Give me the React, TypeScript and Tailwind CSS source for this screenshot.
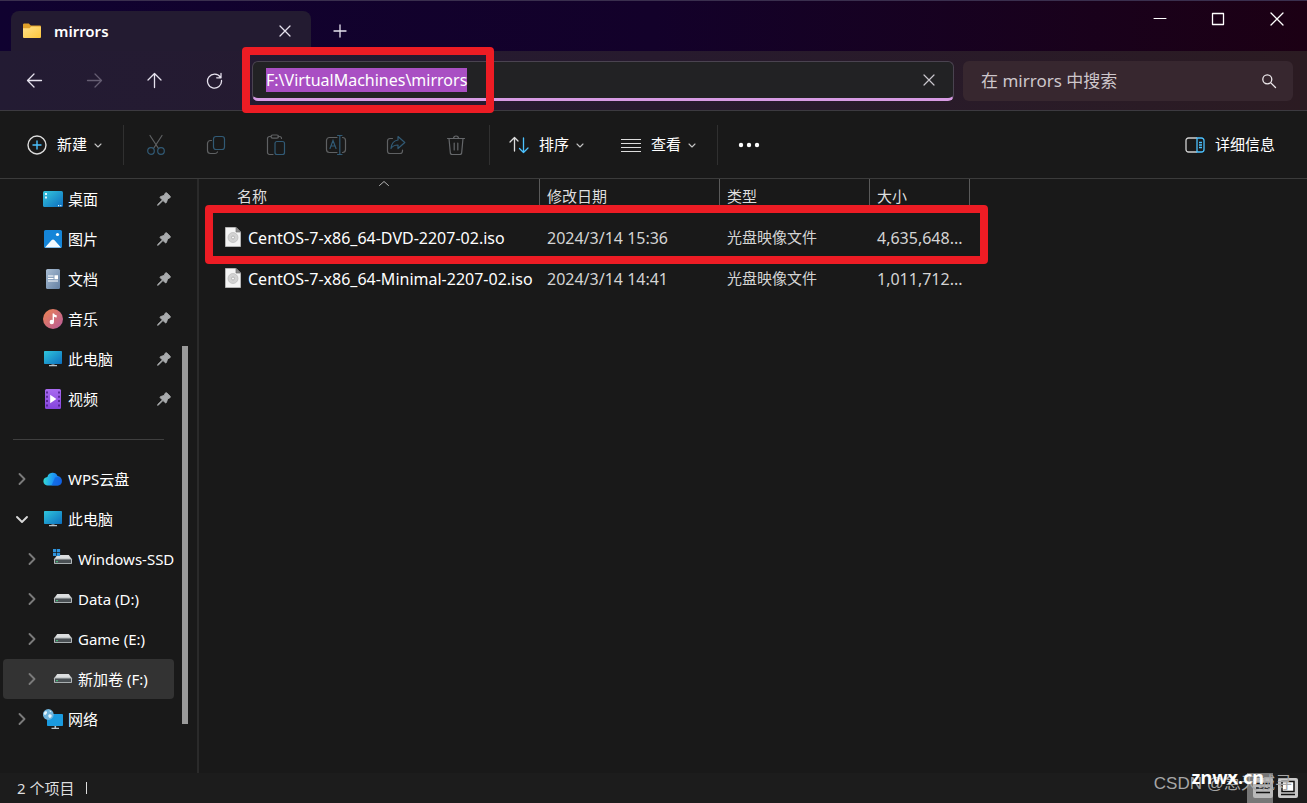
import React, { useEffect, useRef, useState } from 'react';

type IconProps = { className?: string };

type SideItem = {
    label: string;
    icon: React.FC<IconProps>;
    level?: number;
    pinned?: boolean;
    expanded?: boolean;
    selected?: boolean;
};

const FolderIcon: React.FC<IconProps> = ({ className }) => (
    <svg viewBox="0 0 20 16" className={className}>
        <path d="M1 1.5A1.2 1.2 0 0 1 2.200.5h4.600l2 2H18a1 1 0 0 1 1 1V6H1z" fill="#e0a02a" />
        <path d="M1 5.200h6.500l1.800-1.700H18a1 1 0 0 1 1 1V14a1 1 0 0 1-1 1H2a1 1 0 0 1-1-1z" fill="url(#folder)" />
        <defs>
            <linearGradient id="folder" x1="0" y1="0" x2="1" y2="1">
                <stop stopColor="#ffe08a" />
                <stop offset="1" stopColor="#fcc63c" />
            </linearGradient>
        </defs>
    </svg>
);

const DesktopIcon: React.FC<IconProps> = ({ className }) => (
    <svg viewBox="0 0 20 20" className={className}>
        <rect x="0" y="2" width="20" height="16" rx="1.500" fill="url(#desktop)" />
        <path d="M2 4h2v2H2zM2 7.500h2v2H2z" fill="#d8f6ff" />
        <path d="M15 16h1.200v1.200H15zM17.200 16h1.200v1.200h-1.200z" fill="#d8f6ff" />
        <defs>
            <linearGradient id="desktop" x1="0" y1="0" x2="1" y2="1">
                <stop stopColor="#35c7dc" />
                <stop offset="1" stopColor="#0c6cbf" />
            </linearGradient>
        </defs>
    </svg>
);

const PictureIcon: React.FC<IconProps> = ({ className }) => (
    <svg viewBox="0 0 20 20" className={className}>
        <rect x="1" y="1" width="18" height="18" rx="1.500" fill="#1585d8" />
        <path d="M2 18.500l6.500-7.200a2 2 0 0 1 3 0l6.500 7.200z" fill="#f2faff" />
        <circle cx="14.500" cy="5.500" r="1.600" fill="#fff" />
    </svg>
);

const DocumentIcon: React.FC<IconProps> = ({ className }) => (
    <svg viewBox="0 0 20 20" className={className}>
        <rect x="3" y="0" width="14" height="20" rx="1.500" fill="url(#doc)" />
        <path d="M5 7h5.500M5 9.500h5.500M5 12h10" stroke="#fff" strokeWidth="1.200" />
        <path d="M11.500 6.200h3.500v4h-3.500z" fill="#fff" />
        <defs>
            <linearGradient id="doc" x1="0" y1="0" x2="1" y2="1">
                <stop stopColor="#a9bdd3" />
                <stop offset="1" stopColor="#6480a3" />
            </linearGradient>
        </defs>
    </svg>
);

const MusicIcon: React.FC<IconProps> = ({ className }) => (
    <svg viewBox="0 0 20 20" className={className}>
        <circle cx="10" cy="10" r="10" fill="url(#music)" />
        <circle cx="8.800" cy="13" r="2.200" fill="#fff" />
        <path d="M9.600 4.500h1.400c.4 1.200 1.200 1.600 2.700 1.800v2.200c-1.200 0-2-.3-2.700-.8V13H9.600z" fill="#fff" />
        <defs>
            <linearGradient id="music" x1="0" y1="0" x2="1" y2="1">
                <stop stopColor="#ee8450" />
                <stop offset="1" stopColor="#b65a9c" />
            </linearGradient>
        </defs>
    </svg>
);

const ComputerIcon: React.FC<IconProps> = ({ className }) => (
    <svg viewBox="0 0 20 20" className={className}>
        <rect x="1" y="2" width="18" height="13" rx="0.800" fill="url(#pc)" />
        <path d="M8.500 15h3v1.200h-3z" fill="#6d7a83" />
        <path d="M6 16h8v1.300H6z" fill="#b9c3c9" />
        <defs>
            <linearGradient id="pc" x1="0" y1="0" x2="1" y2="1">
                <stop stopColor="#2fc5dc" />
                <stop offset="1" stopColor="#0d70c0" />
            </linearGradient>
        </defs>
    </svg>
);

const VideoIcon: React.FC<IconProps> = ({ className }) => (
    <svg viewBox="0 0 20 20" className={className}>
        <rect x="2" y="0" width="16" height="20" rx="1.500" fill="url(#video)" />
        <path d="M7.200 5.800l6.200 4.200-6.200 4.200z" fill="#fff" />
        <path
            d="M3.200 2.500h1.600v2H3.200zM3.200 6.800h1.600v2H3.200zM3.200 11.100h1.600v2H3.200zM3.200 15.400h1.600v2H3.200zM15.200 2.500h1.600v2h-1.600zM15.200 6.800h1.600v2h-1.600zM15.200 11.100h1.600v2h-1.600zM15.200 15.400h1.600v2h-1.600z"
            fill="#4a1d85"
        />
        <defs>
            <linearGradient id="video" x1="0" y1="0" x2="0" y2="1">
                <stop stopColor="#a96bf0" />
                <stop offset="1" stopColor="#8544dc" />
            </linearGradient>
        </defs>
    </svg>
);

const CloudIcon: React.FC<IconProps> = ({ className }) => (
    <svg viewBox="0 0 20 20" className={className}>
        <path d="M5 16.500a4.300 4.300 0 0 1-.6-8.600A5.300 5.300 0 0 1 14.500 7a4.800 4.800 0 0 1 .2 9.500z" fill="url(#cloud)" />
        <path d="M19 12.500a4.700 4.700 0 0 0-7-4L8.500 16.500h6.200a4.500 4.500 0 0 0 4.300-4z" fill="#0f5fe0" fillOpacity="0.700" />
        <defs>
            <linearGradient id="cloud" x1="0" y1="0.500" x2="1" y2="0.600">
                <stop stopColor="#35dcd0" />
                <stop offset="0.500" stopColor="#1e9af5" />
                <stop offset="1" stopColor="#1465e8" />
            </linearGradient>
        </defs>
    </svg>
);

const DriveShape = () => (
    <>
        <path d="M4.200 7h11.600L19 11.500H1z" fill="#dcdedf" />
        <rect x="1" y="10.500" width="18" height="5.500" rx="0.800" fill="#b4b9bb" />
        <rect x="2" y="11.500" width="16" height="3.600" fill="#4a5054" />
        <path d="M3.300 13h1.400v1.200H3.300z" fill="#49e08a" />
    </>
);

const DriveIcon: React.FC<IconProps> = ({ className }) => (
    <svg viewBox="0 0 20 20" className={className}>
        <g transform="translate(0 -2)">
            <DriveShape />
        </g>
    </svg>
);

const SystemDriveIcon: React.FC<IconProps> = ({ className }) => (
    <svg viewBox="0 0 20 20" className={className}>
        <g transform="translate(0 -1)">
            <DriveShape />
        </g>
        <path d="M0 0h3.200v3.200H0zM3.900 0h3.200v3.200H3.900zM0 3.900h3.200v3.200H0zM3.900 3.900h3.200v3.200H3.900z" fill="#2f93dc" />
    </svg>
);

const NetworkIcon: React.FC<IconProps> = ({ className }) => (
    <svg viewBox="0 0 20 20" className={className}>
        <rect x="4" y="5" width="16" height="12" rx="0.800" fill="#1a9be0" />
        <path d="M11.500 17h1.600v2h-1.600zM8.500 18.700h7.500V20H8.500z" fill="#b9c3c9" />
        <circle cx="5.300" cy="5.500" r="5.400" fill="#6fb4dd" />
        <path d="M2 2.500c2-.8 2.500.5 1.800 1.800S2 6.500 1.200 5.500 1 3.300 2 2.500zM6 5.500c1.500-.6 3 .2 2.600 1.700S6.800 9.500 6 8.500 5 6 6 5.500zM6.500 1.200l2 1.300-1.500.8z" fill="#e3f4fc" />
    </svg>
);

const PinIcon: React.FC<IconProps> = ({ className }) => (
    <svg viewBox="0 0 14 14" className={className}>
        <path d="M8.400 1c.4-.5 1-.5 1.500 0l3.200 3.200c.5.5.4 1.200-.2 1.500L10.600 7 9.400 10.400c-.2.600-.8.700-1.200.3L6 8.500 1.500 12.900l-1 .4.4-1L5.400 7.900 3.300 5.800c-.4-.4-.3-1 .3-1.200l3.500-1.200z" fill="#a9abad" stroke="#a9abad" strokeWidth="0.900" />
    </svg>
);

const DiscFileIcon: React.FC<IconProps> = ({ className }) => (
    <svg viewBox="0 0 16 22" className={className}>
        <path d="M.5.500h10.500l4.500 4.500v14.500H.5z" fill="#f4f4f4" stroke="#b5b5b5" />
        <path d="M11 .5V5h4.500z" fill="#8d8d8d" stroke="#6d6d6d" strokeWidth="0.700" />
        <circle cx="8" cy="10.500" r="5" fill="#d3d3d3" stroke="#b3b3b3" strokeWidth="0.600" />
        <circle cx="8" cy="10.500" r="1.500" fill="#f4f4f4" stroke="#a5a5a5" strokeWidth="0.700" />
    </svg>
);

const Line: React.FC<IconProps & { d: string; size?: number; width?: number }> = ({ className, d, size = 16, width = 1.3 }) => (
    <svg viewBox={`0 0 ${size} ${size}`} className={className} fill="none" stroke="currentColor" strokeWidth={width} strokeLinecap="round" strokeLinejoin="round">
        <path d={d} />
    </svg>
);

const CLOSE = 'M3 3l10 10M13 3L3 13';
const CHEVRON_DOWN = 'M1 3l3 3 3-3';

const CutIcon = () => (
    <svg viewBox="0 0 20 22" className="h-[22px] w-5" fill="none" stroke="#5f6163" strokeWidth="1.200" strokeLinecap="round">
        <path d="M4 1.500l8.500 13M16 1.500l-8.500 13" />
        <circle cx="5" cy="17" r="3.300" stroke="#315a75" />
        <circle cx="15" cy="17" r="3.300" stroke="#315a75" />
    </svg>
);

const CopyIcon = () => (
    <svg viewBox="0 0 20 20" className="size-5" fill="none" strokeWidth="1.200">
        <path d="M5.500 5.500H4.500A3 3 0 0 0 1.500 8.500v7a3 3 0 0 0 3 3h4.500a3 3 0 0 0 2.500-1.500" stroke="#5f6163" strokeLinecap="round" />
        <rect x="7.500" y="1.500" width="11" height="13" rx="2.500" stroke="#315a75" />
    </svg>
);

const PasteIcon = () => (
    <svg viewBox="0 0 20 22" className="h-[22px] w-5" fill="none" strokeWidth="1.200">
        <path d="M7 20.500H3.500a2 2 0 0 1-2-2v-14a2 2 0 0 1 2-2H5M12 2.500h1.500a2 2 0 0 1 2 2" stroke="#5f6163" strokeLinecap="round" />
        <rect x="5" y="1" width="7.500" height="3.200" rx="1.600" stroke="#5f6163" />
        <rect x="9" y="7.500" width="9.500" height="13" rx="2" stroke="#315a75" />
    </svg>
);

const RenameIcon = () => (
    <svg viewBox="0 0 22 22" className="size-[22px]" fill="none" strokeWidth="1.200" strokeLinecap="round">
        <path d="M12 3.500H4.500a3 3 0 0 0-3 3v9a3 3 0 0 0 3 3H12M17.500 3.500a3 3 0 0 1 3 3v9a3 3 0 0 1-3 3" stroke="#5f6163" />
        <path d="M5 14.500l3-8 3 8M6 12h4M12.500 1.500h4.500M12.500 20.500h4.500M14.800 1.500v19" stroke="#315a75" />
    </svg>
);

const ShareIcon = () => (
    <svg viewBox="0 0 20 20" className="size-5" fill="none" strokeWidth="1.200" strokeLinejoin="round" strokeLinecap="round">
        <path d="M6.500 3.500H4a2.500 2.500 0 0 0-2.500 2.500v10A2.500 2.500 0 0 0 4 18.500h10a2.500 2.500 0 0 0 2.500-2.500v-1" stroke="#5f6163" />
        <path d="M12 1.500L18.800 7.500 12 13.500V10c-3.500 0-5.500 1-7 3.500C5.500 8.500 8 5.500 12 5z" stroke="#315a75" />
    </svg>
);

const DeleteIcon = () => (
    <svg viewBox="0 0 20 22" className="h-[22px] w-5" fill="none" stroke="#65676a" strokeWidth="1.200" strokeLinecap="round">
        <path d="M1.500 4.500h17M7.500 4.500a2.500 2.500 0 0 1 5 0M3 4.500l1.300 14a2 2 0 0 0 2 2h7.400a2 2 0 0 0 2-2l1.300-14M8.200 9v7M11.800 9v7" />
    </svg>
);

const fileActions = [
    { label: '剪切', icon: CutIcon },
    { label: '复制', icon: CopyIcon },
    { label: '粘贴', icon: PasteIcon },
    { label: '重命名', icon: RenameIcon },
    { label: '共享', icon: ShareIcon },
    { label: '删除', icon: DeleteIcon },
];

const quickAccess: SideItem[] = [
    { label: '桌面', icon: DesktopIcon, pinned: true },
    { label: '图片', icon: PictureIcon, pinned: true },
    { label: '文档', icon: DocumentIcon, pinned: true },
    { label: '音乐', icon: MusicIcon, pinned: true },
    { label: '此电脑', icon: ComputerIcon, pinned: true },
    { label: '视频', icon: VideoIcon, pinned: true },
];

const tree: SideItem[] = [
    { label: 'WPS云盘', icon: CloudIcon, level: 0 },
    { label: '此电脑', icon: ComputerIcon, level: 0, expanded: true },
    { label: 'Windows-SSD (C:)', icon: SystemDriveIcon, level: 1 },
    { label: 'Data (D:)', icon: DriveIcon, level: 1 },
    { label: 'Game (E:)', icon: DriveIcon, level: 1 },
    { label: '新加卷 (F:)', icon: DriveIcon, level: 1, selected: true },
    { label: '网络', icon: NetworkIcon, level: 0 },
];

const columns = ['名称', '修改日期', '类型', '大小'];

const files = [
    { name: 'CentOS-7-x86_64-DVD-2207-02.iso', date: '2024/3/14 15:36', type: '光盘映像文件', size: '4,635,648...' },
    { name: 'CentOS-7-x86_64-Minimal-2207-02.iso', date: '2024/3/14 14:41', type: '光盘映像文件', size: '1,011,712...' },
];

const TitleBar = () => (
    <header className="flex h-[51px] justify-between border-t border-[#3a2f4e] bg-linear-to-r from-[#100230] via-[#13012a] to-[#1c0014]">
        <div className="flex items-end pl-[11px]">
            <div className="flex h-10 w-[300px] items-center rounded-t-lg bg-[#231b31] pr-[18px] pl-[11px]">
                <FolderIcon className="h-4 w-5" />
                <span className="ml-3 flex-1 text-[15px] font-semibold text-white">mirrors</span>
                <button aria-label="关闭标签页" className="text-[#e6e2ee]">
                    <Line d={CLOSE} className="size-4" />
                </button>
            </div>
            <button aria-label="新建标签页" className="ml-[21px] flex h-10 items-center text-[#e6e2ee]">
                <Line d="M8 2v12M2 8h12" className="size-4" />
            </button>
        </div>
        <div className="flex h-9 items-center text-white">
            <button aria-label="最小化" className="flex w-[58px] justify-center">
                <Line d="M2 7.500h12" width={1} className="size-4" />
            </button>
            <button aria-label="最大化" className="flex w-[58px] justify-center">
                <Line d="M2.500 2.500h11v11h-11z" className="size-4" />
            </button>
            <button aria-label="关闭" className="flex w-[60px] justify-center">
                <Line d="M2 2l12 12M14 2L2 14" className="size-4" />
            </button>
        </div>
    </header>
);

const NavBar = () => {
    const [path, setPath] = useState('F:\\VirtualMachines\\mirrors');
    const inputRef = useRef<HTMLInputElement>(null);

    useEffect(() => {
        inputRef.current?.focus();
        inputRef.current?.select();
    }, []);

    return (
        <nav className="flex h-[60px] items-center border-b border-[#3c3a40] bg-linear-to-r from-[#231b33] via-[#271a2e] to-[#2b1b22] pr-[14px] pl-1">
            <button aria-label="后退" className="flex w-[60px] justify-center text-[#e6e2ee]">
                <Line d="M15.500 8.500h-14M8 2L1.500 8.500 8 15" size={17} className="size-[17px]" />
            </button>
            <button aria-label="前进" className="flex w-[60px] justify-center text-[#655d72]">
                <Line d="M1.500 8.500h14M9 2l6.500 6.500L9 15" size={17} className="size-[17px]" />
            </button>
            <button aria-label="上移" className="flex w-[60px] justify-center text-[#e6e2ee]">
                <Line d="M8.500 15.500v-14M2 8l6.500-6.500L15 8" size={17} className="size-[17px]" />
            </button>
            <button aria-label="刷新" className="flex w-[60px] justify-center text-[#e6e2ee]">
                <Line d="M14.500 5.500A7 7 0 1 0 15.500 8.500M15 1.500v4.300h-4.300" size={17} className="size-[17px]" />
            </button>
            <div className="relative ml-2 flex h-10 flex-1 items-center rounded-md border border-b-[3px] border-[#4a4350] border-b-[#d79be3] bg-[#222224] pr-4 pl-[13px]">
                <input
                    ref={inputRef}
                    aria-label="地址"
                    value={path}
                    onChange={(e) => setPath(e.target.value)}
                    spellCheck={false}
                    className="min-w-0 flex-1 bg-transparent text-base text-white outline-none selection:bg-[#a94fc3] selection:text-white"
                />
                <button aria-label="清除" className="text-[#c9c6cd]">
                    <Line d={CLOSE} width={1.2} className="size-4" />
                </button>
                <div className="pointer-events-none absolute -top-[15px] -left-[11px] h-[66px] w-[252px] rounded-sm border-8 border-[#ed1c24]" />
            </div>
            <label className="ml-[9px] flex h-10 w-[330px] items-center rounded-md bg-[#37272f] pr-4 pl-[18px]">
                <input
                    aria-label="搜索"
                    placeholder="在 mirrors 中搜索"
                    className="min-w-0 flex-1 bg-transparent text-[17px] text-white outline-none placeholder:text-[#cdc6cb]"
                />
                <Line d="M10.800 6.300a4.500 4.500 0 1 1-9 0 4.500 4.500 0 0 1 9 0zM9.600 9.600l4.900 4.900" className="size-4 text-[#eee9ec]" />
            </label>
        </nav>
    );
};

const Separator = () => <div className="h-10 w-px bg-[#303030]" />;

const Toolbar = () => (
    <div className="flex h-[68px] items-center border-b border-[#3b3b3b] bg-[#191919] pr-8 pl-[27px] text-[15px] text-white">
        <button className="mr-[21px] flex items-center">
            <svg viewBox="0 0 20 20" className="size-5" fill="none" strokeWidth="1.400" strokeLinecap="round">
                <circle cx="10" cy="10" r="9" stroke="#dcdcdc" />
                <path d="M10 6v8M6 10h8" stroke="#4cc2ff" />
            </svg>
            <span className="mr-[7px] ml-[10px]">新建</span>
            <Line d={CHEVRON_DOWN} size={8} width={1.1} className="size-2 text-[#c4c4c4]" />
        </button>
        <Separator />
        <div className="mr-[3px] ml-[2px] flex">
            {fileActions.map(({ label, icon: Icon }) => (
                <button key={label} aria-label={label} disabled className="flex h-10 w-[60px] items-center justify-center">
                    <Icon />
                </button>
            ))}
        </div>
        <Separator />
        <button className="ml-[19px] flex items-center">
            <svg viewBox="0 0 20 18" className="h-[18px] w-5" fill="none" strokeWidth="1.300" strokeLinecap="round" strokeLinejoin="round">
                <path d="M5.500 15V1.500M1 6l4.500-4.500L9 5" stroke="#dcdcdc" />
                <path d="M14.500 2v14.500M10.500 12.500l4 4 4.500-4.500" stroke="#4cc2ff" />
            </svg>
            <span className="mr-[7px] ml-[10px]">排序</span>
            <Line d={CHEVRON_DOWN} size={8} width={1.1} className="size-2 text-[#c4c4c4]" />
        </button>
        <button className="mr-[21px] ml-[37px] flex items-center">
            <svg viewBox="0 0 20 16" className="h-4 w-5" fill="none" strokeWidth="1.200" stroke="#dcdcdc">
                <path d="M0 2.500h20M0 6.500h20M0 10.500h20M0 14.500h20" />
            </svg>
            <span className="mr-[7px] ml-[10px]">查看</span>
            <Line d={CHEVRON_DOWN} size={8} width={1.1} className="size-2 text-[#c4c4c4]" />
        </button>
        <Separator />
        <button aria-label="更多" className="ml-5">
            <svg viewBox="0 0 22 6" className="h-[6px] w-[22px]" fill="#fff">
                <circle cx="3" cy="3" r="2.200" />
                <circle cx="11" cy="3" r="2.200" />
                <circle cx="19" cy="3" r="2.200" />
            </svg>
        </button>
        <button className="ml-auto flex items-center gap-[10px]">
            <svg viewBox="0 0 20 16" className="h-4 w-5" fill="none" strokeWidth="1.300">
                <path d="M12 1H3.500A2.500 2.500 0 0 0 1 3.500v9A2.500 2.500 0 0 0 3.500 15H12" stroke="#d0d0d0" />
                <path d="M12 1h4.500A2.500 2.500 0 0 1 19 3.500v9a2.500 2.500 0 0 1-2.500 2.500H12zM14 5.500h3M14 8h3M14 10.500h3" stroke="#4cc2ff" />
            </svg>
            <span>详细信息</span>
        </button>
    </div>
);

const SideRow: React.FC<{ item: SideItem }> = ({ item }) => {
    const Icon = item.icon;
    return (
        <li
            className={`flex h-10 items-center overflow-hidden rounded-sm whitespace-nowrap ${item.level === 1 ? 'pl-[21px]' : 'pl-[11px]'} ${item.selected ? 'bg-[#333333]' : ''}`}
        >
            <span className={`mr-[13px] size-4 shrink-0 ${item.expanded ? 'text-[#d8d8d8]' : 'text-[#7a7a7a]'}`}>
                {item.level !== undefined && (
                    <Line d={item.expanded ? 'M3 6l5 5 5-5' : 'M5.500 3l5 5-5 5'} width={1.9} className="size-4" />
                )}
            </span>
            <Icon className="size-5 shrink-0" />
            <a href="#" className="ml-[5px] flex-1">{item.label}</a>
            {item.pinned && <PinIcon className="mr-[3px] size-[14px] shrink-0" />}
        </li>
    );
};

const Sidebar = () => (
    <aside className="flex w-[199px] shrink-0 border-r-2 border-[#2a2a2a] text-[15px] text-white">
        <div className="w-[174px] pl-[3px]">
            <ul>
                {quickAccess.map((item) => <SideRow key={item.label} item={item} />)}
            </ul>
            <div className="flex h-10 items-center px-[10px]">
                <hr className="flex-1 border-[#3f3f3f]" />
            </div>
            <ul>
                {tree.map((item) => <SideRow key={item.label} item={item} />)}
            </ul>
        </div>
        <div className="mt-[167px] ml-2 h-[378px] w-[6px] bg-[#9a9a9a]" />
    </aside>
);

const FileList = () => (
    <main className="relative min-w-0 flex-1">
        <Line d="M1.500 5.500L6 1.500l4.500 4" size={12} width={1} className="absolute top-[1px] left-[179px] size-3 text-[#b5b5b5]" />
        <table className="ml-[26px] w-[745px] table-fixed text-left text-base">
            <colgroup>
                <col className="w-[315px]" />
                <col className="w-[180px]" />
                <col className="w-[150px]" />
                <col className="w-[100px]" />
            </colgroup>
            <thead className="text-[15px] text-[#dedede]">
                <tr className="h-[38px] align-top">
                    {columns.map((column, i) => (
                        <th key={column} className="font-normal">
                            <div className={`flex h-7 items-end border-r border-[#5a5a5a] ${i === 0 ? 'pl-3' : 'pl-[7px]'}`}>{column}</div>
                        </th>
                    ))}
                </tr>
            </thead>
            <tbody className="text-[#d4d4d4]">
                {files.map((file) => (
                    <tr key={file.name} className="h-[41px]">
                        <td className="whitespace-nowrap text-white">
                            <div className="flex items-center gap-[7px]">
                                <DiscFileIcon className="h-[22px] w-4" />
                                {file.name}
                            </div>
                        </td>
                        <td className="pl-[7px]">{file.date}</td>
                        <td className="pl-[7px] text-[15px]">{file.type}</td>
                        <td className="pl-[7px] whitespace-nowrap">{file.size}</td>
                    </tr>
                ))}
            </tbody>
        </table>
        <div className="pointer-events-none absolute top-[26px] left-[6px] h-[59px] w-[783px] rounded-sm border-8 border-[#ed1c24]" />
    </main>
);

const StatusBar = () => (
    <footer className="relative flex h-[30px] items-center bg-[#1c1c1c] pr-[9px] pl-[17px] text-[15px] text-[#dedede]">
        <span>2 个项目</span>
        <span className="ml-3 h-3 w-px bg-[#dedede]" />
        <button aria-label="详细信息视图" className="ml-auto flex h-[30px] w-[26px] items-center justify-end bg-[#777777]">
            <svg viewBox="0 0 20 20" className="size-5">
                <rect width="20" height="20" rx="2" fill="#b9b9b9" />
                <path d="M3 5.500h14M3 10h14M3 14.500h14" stroke="#111" strokeWidth="1.300" />
            </svg>
        </button>
        <button aria-label="大图标视图" className="ml-[5px]">
            <svg viewBox="0 0 20 20" className="size-5">
                <rect width="20" height="20" rx="2" fill="#c9c9c9" />
                <path d="M4 3.500h12v10H4z" fill="#fff" stroke="#111" strokeWidth="1.500" />
                <path d="M3 16.500h14" stroke="#111" strokeWidth="1.500" />
            </svg>
        </button>
        <span className="pointer-events-none absolute right-[15px] bottom-[6px] font-['Liberation_Sans','Noto_Sans_CJK_SC',sans-serif] text-[17px] leading-[26px] text-[#a6a6a6]">
            CSDN @急天城寻
        </span>
        <span className="pointer-events-none absolute right-[43px] bottom-[14px] text-[18px] leading-6 font-bold text-white">znwx.cn</span>
    </footer>
);

export default function App() {
    return (
        <div className="flex min-h-screen flex-col bg-[#191919] font-['Noto_Sans','Noto_Sans_CJK_SC',sans-serif]">
            <TitleBar />
            <NavBar />
            <Toolbar />
            <div className="flex flex-1">
                <Sidebar />
                <FileList />
            </div>
            <StatusBar />
        </div>
    );
}
